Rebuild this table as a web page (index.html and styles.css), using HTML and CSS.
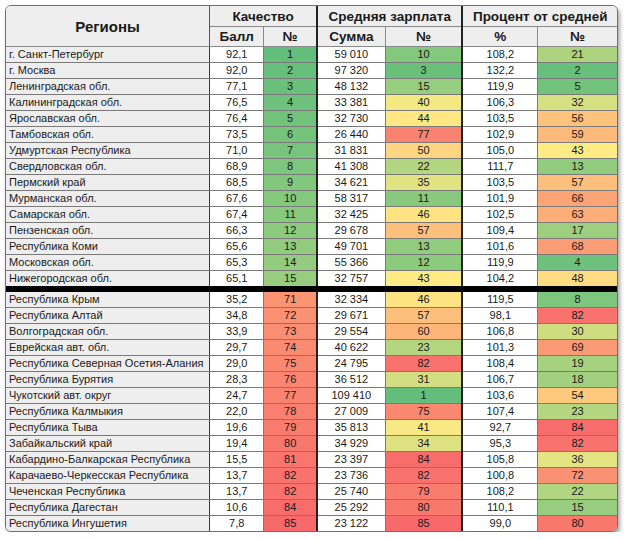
FILE: index.html
```html
<!DOCTYPE html>
<html lang="ru">
<head>
<meta charset="utf-8">
<title>Регионы</title>
<link rel="stylesheet" href="styles.css">
</head>
<body>
<div class="card">
<table class="grid">
<colgroup>
<col class="c-reg"><col class="c-ball"><col class="c-n1"><col class="c-sum"><col class="c-n2"><col class="c-pct"><col class="c-n3">
</colgroup>
<thead>
<tr class="h1">
<th rowspan="2" class="reg-h">Регионы</th>
<th colspan="2" class="grp">Качество</th>
<th colspan="2" class="grp">Средняя зарплата</th>
<th colspan="2" class="grp last">Процент от средней</th>
</tr>
<tr class="h2">
<th class="sub">Балл</th><th class="sub grp-end">№</th>
<th class="sub">Сумма</th><th class="sub grp-end">№</th>
<th class="sub">%</th><th class="sub last">№</th>
</tr>
</thead>
<tbody>
<tr><td class="reg">г. Санкт-Петербург</td><td>92,1</td><td class="rk g grp-end" style="--r:1">1</td><td>59 010</td><td class="rk g grp-end" style="--r:10">10</td><td>108,2</td><td class="rk g last" style="--r:21">21</td></tr>
<tr><td class="reg">г. Москва</td><td>92,0</td><td class="rk g grp-end" style="--r:2">2</td><td>97 320</td><td class="rk g grp-end" style="--r:3">3</td><td>132,2</td><td class="rk g last" style="--r:2">2</td></tr>
<tr><td class="reg">Ленинградская обл.</td><td>77,1</td><td class="rk g grp-end" style="--r:3">3</td><td>48 132</td><td class="rk g grp-end" style="--r:15">15</td><td>119,9</td><td class="rk g last" style="--r:5">5</td></tr>
<tr><td class="reg">Калининградская обл.</td><td>76,5</td><td class="rk g grp-end" style="--r:4">4</td><td>33 381</td><td class="rk g grp-end" style="--r:40">40</td><td>106,3</td><td class="rk g last" style="--r:32">32</td></tr>
<tr><td class="reg">Ярославская обл.</td><td>76,4</td><td class="rk g grp-end" style="--r:5">5</td><td>32 730</td><td class="rk r grp-end" style="--r:44">44</td><td>103,5</td><td class="rk r last" style="--r:56">56</td></tr>
<tr><td class="reg">Тамбовская обл.</td><td>73,5</td><td class="rk g grp-end" style="--r:6">6</td><td>26 440</td><td class="rk r grp-end" style="--r:77">77</td><td>102,9</td><td class="rk r last" style="--r:59">59</td></tr>
<tr><td class="reg">Удмуртская Республика</td><td>71,0</td><td class="rk g grp-end" style="--r:7">7</td><td>31 831</td><td class="rk r grp-end" style="--r:50">50</td><td>105,0</td><td class="rk g last" style="--r:43">43</td></tr>
<tr><td class="reg">Свердловская обл.</td><td>68,9</td><td class="rk g grp-end" style="--r:8">8</td><td>41 308</td><td class="rk g grp-end" style="--r:22">22</td><td>111,7</td><td class="rk g last" style="--r:13">13</td></tr>
<tr><td class="reg">Пермский край</td><td>68,5</td><td class="rk g grp-end" style="--r:9">9</td><td>34 621</td><td class="rk g grp-end" style="--r:35">35</td><td>103,5</td><td class="rk r last" style="--r:57">57</td></tr>
<tr><td class="reg">Мурманская обл.</td><td>67,6</td><td class="rk g grp-end" style="--r:10">10</td><td>58 317</td><td class="rk g grp-end" style="--r:11">11</td><td>101,9</td><td class="rk r last" style="--r:66">66</td></tr>
<tr><td class="reg">Самарская обл.</td><td>67,4</td><td class="rk g grp-end" style="--r:11">11</td><td>32 425</td><td class="rk r grp-end" style="--r:46">46</td><td>102,5</td><td class="rk r last" style="--r:63">63</td></tr>
<tr><td class="reg">Пензенская обл.</td><td>66,3</td><td class="rk g grp-end" style="--r:12">12</td><td>29 678</td><td class="rk r grp-end" style="--r:57">57</td><td>109,4</td><td class="rk g last" style="--r:17">17</td></tr>
<tr><td class="reg">Республика Коми</td><td>65,6</td><td class="rk g grp-end" style="--r:13">13</td><td>49 701</td><td class="rk g grp-end" style="--r:13">13</td><td>101,6</td><td class="rk r last" style="--r:68">68</td></tr>
<tr><td class="reg">Московская обл.</td><td>65,3</td><td class="rk g grp-end" style="--r:14">14</td><td>55 366</td><td class="rk g grp-end" style="--r:12">12</td><td>119,9</td><td class="rk g last" style="--r:4">4</td></tr>
<tr><td class="reg">Нижегородская обл.</td><td>65,1</td><td class="rk g grp-end" style="--r:15">15</td><td>32 757</td><td class="rk g grp-end" style="--r:43">43</td><td>104,2</td><td class="rk r last" style="--r:48">48</td></tr>
<tr class="sep"><td class="reg">Республика Крым</td><td>35,2</td><td class="rk r grp-end" style="--r:71">71</td><td>32 334</td><td class="rk r grp-end" style="--r:46">46</td><td>119,5</td><td class="rk g last" style="--r:8">8</td></tr>
<tr><td class="reg">Республика Алтай</td><td>34,8</td><td class="rk r grp-end" style="--r:72">72</td><td>29 671</td><td class="rk r grp-end" style="--r:57">57</td><td>98,1</td><td class="rk r last" style="--r:82">82</td></tr>
<tr><td class="reg">Волгоградская обл.</td><td>33,9</td><td class="rk r grp-end" style="--r:73">73</td><td>29 554</td><td class="rk r grp-end" style="--r:60">60</td><td>106,8</td><td class="rk g last" style="--r:30">30</td></tr>
<tr><td class="reg">Еврейская авт. обл.</td><td>29,7</td><td class="rk r grp-end" style="--r:74">74</td><td>40 622</td><td class="rk g grp-end" style="--r:23">23</td><td>101,3</td><td class="rk r last" style="--r:69">69</td></tr>
<tr><td class="reg">Республика Северная Осетия-Алания</td><td>29,0</td><td class="rk r grp-end" style="--r:75">75</td><td>24 795</td><td class="rk r grp-end" style="--r:82">82</td><td>108,4</td><td class="rk g last" style="--r:19">19</td></tr>
<tr><td class="reg">Республика Бурятия</td><td>28,3</td><td class="rk r grp-end" style="--r:76">76</td><td>36 512</td><td class="rk g grp-end" style="--r:31">31</td><td>106,7</td><td class="rk g last" style="--r:18">18</td></tr>
<tr><td class="reg">Чукотский авт. округ</td><td>24,7</td><td class="rk r grp-end" style="--r:77">77</td><td>109 410</td><td class="rk g grp-end" style="--r:1">1</td><td>103,6</td><td class="rk r last" style="--r:54">54</td></tr>
<tr><td class="reg">Республика Калмыкия</td><td>22,0</td><td class="rk r grp-end" style="--r:78">78</td><td>27 009</td><td class="rk r grp-end" style="--r:75">75</td><td>107,4</td><td class="rk g last" style="--r:23">23</td></tr>
<tr><td class="reg">Республика Тыва</td><td>19,6</td><td class="rk r grp-end" style="--r:79">79</td><td>35 813</td><td class="rk g grp-end" style="--r:41">41</td><td>92,7</td><td class="rk r last" style="--r:84">84</td></tr>
<tr><td class="reg">Забайкальский край</td><td>19,4</td><td class="rk r grp-end" style="--r:80">80</td><td>34 929</td><td class="rk g grp-end" style="--r:34">34</td><td>95,3</td><td class="rk r last" style="--r:82">82</td></tr>
<tr><td class="reg">Кабардино-Балкарская Республика</td><td>15,5</td><td class="rk r grp-end" style="--r:81">81</td><td>23 397</td><td class="rk r grp-end" style="--r:84">84</td><td>105,8</td><td class="rk g last" style="--r:36">36</td></tr>
<tr><td class="reg">Карачаево-Черкесская Республика</td><td>13,7</td><td class="rk r grp-end" style="--r:82">82</td><td>23 736</td><td class="rk r grp-end" style="--r:82">82</td><td>100,8</td><td class="rk r last" style="--r:72">72</td></tr>
<tr><td class="reg">Чеченская Республика</td><td>13,7</td><td class="rk r grp-end" style="--r:82">82</td><td>25 740</td><td class="rk r grp-end" style="--r:79">79</td><td>108,2</td><td class="rk g last" style="--r:22">22</td></tr>
<tr><td class="reg">Республика Дагестан</td><td>10,6</td><td class="rk r grp-end" style="--r:84">84</td><td>25 292</td><td class="rk r grp-end" style="--r:80">80</td><td>110,1</td><td class="rk g last" style="--r:15">15</td></tr>
<tr><td class="reg">Республика Ингушетия</td><td>7,8</td><td class="rk r grp-end" style="--r:85">85</td><td>23 122</td><td class="rk r grp-end" style="--r:85">85</td><td>99,0</td><td class="rk r last" style="--r:80">80</td></tr>
</tbody>
</table>
</div>
</body>
</html>
```
FILE: styles.css
```css
html, body {
  margin: 0;
  padding: 0;
  background: #ffffff;
}

body {
  padding: 5px 0 0 5px;
  font-family: "Liberation Sans", Arial, sans-serif;
  color: #1a1a1a;
}

.card {
  width: 611px;
  border: 1px solid #6f6f6f;
  border-radius: 6px;
  overflow: hidden;
  box-shadow: 2px 3px 4px rgba(0, 0, 0, 0.35);
  background: #ffffff;
}

.grid {
  width: 100%;
  border-collapse: collapse;
  table-layout: fixed;
}

.c-reg { width: 203px; }
.c-ball { width: 54px; }
.c-n1 { width: 53px; }
.c-sum { width: 68px; }
.c-n2 { width: 77px; }
.c-pct { width: 75px; }
.c-n3 { width: 79px; }

th {
  background: #eeeeee;
  font-weight: bold;
  font-size: 13.5px;
  padding: 0;
  border: 1px solid #8a8a8a;
  text-align: center;
  color: #1a1a1a;
}

.h1 th { height: 20px; }
.h2 th { height: 19px; }

.reg-h {
  font-size: 15px;
  border-right: 1px solid #555555;
}

.grp { border-right: 2px solid #222222; }

td {
  height: 15px;
  padding: 0;
  font-size: 11px;
  line-height: 15px;
  text-align: center;
  border: 1px solid #7a7a7a;
  white-space: nowrap;
  overflow: hidden;
}

td.reg {
  text-align: left;
  padding-left: 3px;
  background: #eeeeee;
  border-right: 1px solid #3a3a3a;
}

.grp-end { border-right: 2px solid #222222; }

th.last, td.last { border-right: 0; }
th:first-child, td:first-child { border-left: 0; }
thead tr:first-child th { border-top: 0; }
tbody tr:last-child td { border-bottom: 0; }

.rk.g {
  background: color-mix(in srgb, #ffeb84 calc((var(--r) - 1) / 42 * 100%), #63be7b);
}

.rk.r {
  background: color-mix(in srgb, #f8696b calc((var(--r) - 43) / 42 * 100%), #ffeb84);
}

.sep td {
  border-top: 6px solid #000000;
}
```
